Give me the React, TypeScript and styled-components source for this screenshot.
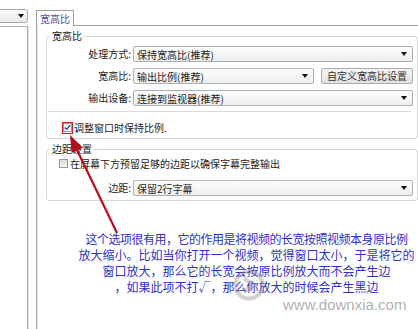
import styled, { createGlobalStyle } from "styled-components";

const GlobalStyle = createGlobalStyle`
  html, body {
    margin: 0;
    padding: 0;
    background: #fff;
  }
  body {
    width: 418px;
    height: 329px;
    overflow: hidden;
    font-family: "Noto Sans CJK SC", "Liberation Sans", sans-serif;
    color: #222;
  }
`;

const ComboArrow = () => (
  <Arrow viewBox="0 0 6 4" width="6" height="4">
    <path d="M0 0 L6 0 L3 4 Z" fill="#111" />
  </Arrow>
);

const Combo = ({ value, grow }: { value: string; grow?: boolean }) => (
  <ComboBox $grow={grow}>
    <span>{value}</span>
    <ComboArrow />
  </ComboBox>
);

const CheckMark = () => (
  <svg viewBox="0 0 9 9" width="7" height="7">
    <path d="M1 4.5 L3.5 7 L8 1.5" fill="none" stroke="#24488f" strokeWidth="1.6" />
  </svg>
);

const App = () => {
  return (
    <Page>
      <GlobalStyle />
      <LeftPane>
        <MiniSelect>
          <ComboArrow />
        </MiniSelect>
        <LeftBody />
      </LeftPane>

      <TabArea>
        <TabStrip>
          <Tab>宽高比</Tab>
        </TabStrip>
        <TabPanel>
          <Group>
            <Legend>宽高比</Legend>
            <FormGrid>
              <FieldLabel>处理方式:</FieldLabel>
              <Combo value="保持宽高比(推荐)" />
              <FieldLabel>宽高比:</FieldLabel>
              <InlineRow>
                <Combo value="输出比例(推荐)" grow />
                <Button>自定义宽高比设置</Button>
              </InlineRow>
              <FieldLabel>输出设备:</FieldLabel>
              <Combo value="连接到监视器(推荐)" />
            </FormGrid>
            <Separator />
            <CheckRow $indent={15} $top={9}>
              <RedFrame>
                <CheckBox $checked>
                  <CheckMark />
                </CheckBox>
              </RedFrame>
              <CheckText>调整窗口时保持比例.</CheckText>
            </CheckRow>
          </Group>

          <Group $gap={4}>
            <Legend>边距设置</Legend>
            <CheckRow $indent={12} $top={2}>
              <CheckBox />
              <CheckText>在屏幕下方预留足够的边距以确保字幕完整输出</CheckText>
            </CheckRow>
            <FormGrid $top={10}>
              <FieldLabel>边距:</FieldLabel>
              <Combo value="保留2行字幕" />
            </FormGrid>
          </Group>

          <Note>
            <NoteLine $tight>这个选项很有用，它的作用是将视频的长宽按照视频本身原比例</NoteLine>
            <NoteLine>放大缩小。比如当你打开一个视频，觉得窗口太小，于是将它的</NoteLine>
            <NoteLine>窗口放大，那么它的长宽会按原比例放大而不会产生边</NoteLine>
            <NoteLine>，如果此项不打√，那么你放大的时候会产生黑边</NoteLine>
          </Note>
        </TabPanel>
      </TabArea>

      <Overlay viewBox="0 0 418 329" width="418" height="329">
        <line x1="117" y1="233" x2="77" y2="150" stroke="#b3121c" strokeWidth="2.2" />
        <polygon points="70,135 83,147.7 71.5,153" fill="#b3121c" />
      </Overlay>

      <Logo viewBox="0 0 40 40" width="34" height="34">
        <circle cx="20" cy="20" r="16" fill="none" stroke="rgba(130,130,130,0.35)" strokeWidth="5" />
        <path d="M14 12 L26 20 L14 28" fill="none" stroke="rgba(130,130,130,0.35)" strokeWidth="5" />
      </Logo>
      <Site>www.downxia.com</Site>
    </Page>
  );
};

const Page = styled.div`
  position: relative;
  display: flex;
  gap: 8px;
  width: 418px;
  height: 329px;
  overflow: hidden;
  background: #fff;
`;

const LeftPane = styled.div`
  width: 28px;
  flex: none;
  display: flex;
  flex-direction: column;
  padding-top: 9px;
`;

const MiniSelect = styled.div`
  height: 12px;
  margin-left: -4px;
  border: 1px solid #a7abb0;
  border-radius: 2px;
  background: linear-gradient(#fbfbfb, #e9e9e9);
  display: flex;
  align-items: center;
  justify-content: flex-end;
  padding-right: 3px;
`;

const LeftBody = styled.div`
  flex: 1;
  margin-top: 3px;
  border-top: 1px solid #b4b4b4;
  border-right: 1px solid #a9a9a9;
  box-shadow: 1px 0 0 #e4e4e4;
`;

const TabArea = styled.div`
  flex: 1;
  display: flex;
  flex-direction: column;
`;

const TabStrip = styled.div`
  height: 25px;
  display: flex;
  align-items: flex-end;
`;

const Tab = styled.div`
  position: relative;
  z-index: 1;
  height: 15px;
  margin-bottom: -1px;
  padding: 0 3px;
  border: 1px solid #9c9c9c;
  border-bottom: none;
  background: #fff;
  color: #4b4f9e;
  font-size: 10px;
  line-height: 15px;
`;

const TabPanel = styled.div`
  flex: 1;
  border-top: 1px solid #a5a5a5;
  border-left: 1px solid #a5a5a5;
  box-shadow: inset 1px 0 0 #e8e8e8;
  padding: 4px 7px 0 9px;
`;

const Group = styled.fieldset<{ $gap?: number }>`
  margin: ${(p) => p.$gap ?? 0}px 0 0;
  padding: 0 4px 4px 0;
  border: 1px solid #d2d9de;
  border-radius: 3px;
  min-width: 0;
`;

const Legend = styled.legend`
  margin-left: 3px;
  padding: 0 2px;
  font-size: 10px;
  line-height: 12px;
  color: #222;
`;

const FormGrid = styled.div<{ $top?: number }>`
  display: grid;
  grid-template-columns: 84px 1fr;
  grid-auto-rows: 16px;
  column-gap: 2px;
  row-gap: 6px;
  margin-top: ${(p) => p.$top ?? 4}px;
`;

const FieldLabel = styled.div`
  text-align: right;
  font-size: 10px;
  line-height: 16px;
  color: #222;
  white-space: nowrap;
`;

const InlineRow = styled.div`
  display: flex;
  gap: 7px;
`;

const ComboBox = styled.div<{ $grow?: boolean }>`
  flex: ${(p) => (p.$grow ? 1 : "none")};
  height: 16px;
  box-sizing: border-box;
  border: 1px solid #a9b0b8;
  border-radius: 2px;
  background: linear-gradient(#fdfdfd, #eeeeee);
  display: flex;
  align-items: center;
  justify-content: space-between;
  padding: 0 5px 0 3px;
  font-size: 10px;
  color: #1e1e1e;
  white-space: nowrap;
`;

const Arrow = styled.svg`
  flex: none;
  display: block;
`;

const Button = styled.div`
  width: 92px;
  height: 16px;
  box-sizing: border-box;
  border: 1px solid #acacac;
  border-radius: 2px;
  background: linear-gradient(#f5f5f5, #e2e2e2);
  font-size: 10px;
  line-height: 14px;
  text-align: center;
  color: #333;
  white-space: nowrap;
`;

const Separator = styled.div`
  height: 1px;
  margin: 5px 2px 0 1px;
  background: #d6dde2;
`;

const CheckRow = styled.div<{ $indent: number; $top: number }>`
  display: flex;
  align-items: center;
  gap: 1px;
  margin: ${(p) => p.$top}px 0 0 ${(p) => p.$indent}px;
`;

const RedFrame = styled.div`
  width: 9px;
  height: 10px;
  border: 1.5px solid #d0222b;
  display: flex;
  align-items: center;
  justify-content: center;
`;

const CheckBox = styled.div<{ $checked?: boolean }>`
  width: 9px;
  height: 9px;
  box-sizing: border-box;
  border: 1px solid #9a9a9a;
  background: ${(p) => (p.$checked ? "linear-gradient(#e9eef6, #fff)" : "linear-gradient(#dcdcdc, #f4f4f4)")};
  display: flex;
  align-items: center;
  justify-content: center;
  margin-right: 1px;
`;

const CheckText = styled.span`
  font-size: 10px;
  line-height: 13px;
  color: #222;
  white-space: nowrap;
`;

const Note = styled.div`
  margin: 30px 0 0 29px;
  width: 343px;
  text-align: center;
  color: #2f2fd0;
  font-size: 12px;
  line-height: 16px;
`;

const NoteLine = styled.div<{ $tight?: boolean }>`
  white-space: nowrap;
  letter-spacing: ${(p) => (p.$tight ? "-0.5px" : "0")};
`;

const Overlay = styled.svg`
  position: absolute;
  left: 0;
  top: 0;
  pointer-events: none;
`;

const Logo = styled.svg`
  position: absolute;
  left: 232px;
  top: 268px;
  display: block;
  pointer-events: none;
`;

const Site = styled.span`
  position: absolute;
  left: 283px;
  top: 297px;
  font-family: "Liberation Sans", Arial, sans-serif;
  font-size: 15px;
  line-height: 16px;
  color: rgba(120, 120, 120, 0.6);
  pointer-events: none;
`;

export default App;
